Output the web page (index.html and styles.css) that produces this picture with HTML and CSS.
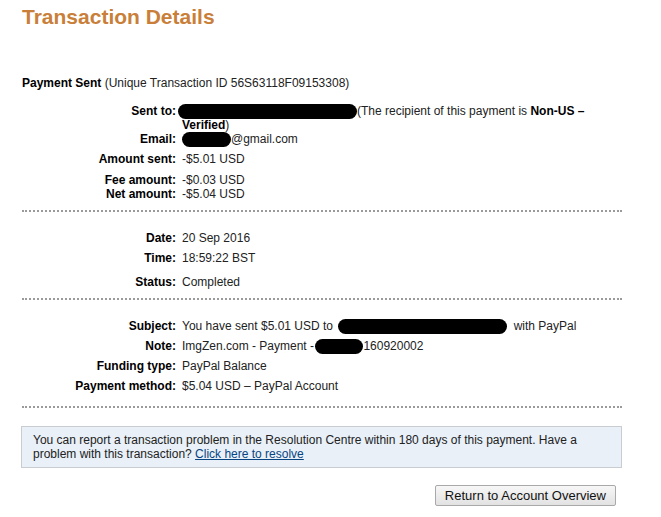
FILE: index.html
```html
<!DOCTYPE html>
<html>
<head>
<meta charset="utf-8">
<link rel="stylesheet" href="styles.css">
</head>
<body>
<div class="page">
  <h1 class="title">Transaction Details</h1>
  <p class="headline"><b>Payment Sent</b> (Unique Transaction ID 56S63118F09153308)</p>

  <div class="details sec1">
    <div class="lbl">Sent to:</div>
    <div class="val"><span class="redact r-sent"></span>(The recipient of this payment is <b>Non-US – Verified</b>)</div>
    <div class="lbl">Email:</div>
    <div class="val"><span class="redact r-email"></span>@gmail.com</div>
    <div class="lbl gap6">Amount sent:</div>
    <div class="val gap6">-$5.01 USD</div>
    <div class="lbl gap7">Fee amount:</div>
    <div class="val gap7">-$0.03 USD</div>
    <div class="lbl">Net amount:</div>
    <div class="val">-$5.04 USD</div>
  </div>
  <div class="rule r1"></div>

  <div class="details sec2">
    <div class="lbl">Date:</div>
    <div class="val">20 Sep 2016</div>
    <div class="lbl gap6">Time:</div>
    <div class="val gap6">18:59:22 BST</div>
    <div class="lbl gap10">Status:</div>
    <div class="val gap10">Completed</div>
  </div>
  <div class="rule r2"></div>

  <div class="details sec3">
    <div class="lbl">Subject:</div>
    <div class="val">You have sent $5.01 USD to <span class="redact r-subj"></span> with PayPal</div>
    <div class="lbl gap6">Note:</div>
    <div class="val gap6">ImgZen.com - Payment - <span class="redact r-note"></span>160920002</div>
    <div class="lbl gap6">Funding type:</div>
    <div class="val gap6">PayPal Balance</div>
    <div class="lbl gap6">Payment method:</div>
    <div class="val gap6">$5.04 USD – PayPal Account</div>
  </div>
  <div class="rule r3"></div>

  <div class="notice">You can report a transaction problem in the Resolution Centre within 180 days of this payment. Have a problem with this transaction? <a href="#" class="link">Click here to resolve</a></div>

  <div class="actions">
    <button class="btn" type="button">Return to Account Overview</button>
  </div>
</div>
</body>
</html>
```

FILE: styles.css
```css
html, body {
  margin: 0;
  padding: 0;
  background: #fff;
}
body {
  font-family: "Liberation Sans", Arial, sans-serif;
  font-size: 12px;
  line-height: 14px;
  color: #222;
}
.page {
  width: 600px;
  padding: 5px 0 0 22px;
}
.title {
  margin: 0;
  font-size: 21px;
  line-height: 24px;
  font-weight: bold;
  color: #c97f3a;
}
.headline {
  margin: 47px 0 0 0;
  color: #222;
}
.headline b {
  color: #000;
}
.details {
  display: grid;
  grid-template-columns: 154px 1fr;
  column-gap: 6px;
}
.sec1 { margin-top: 14px; }
.sec2 { margin-top: 19px; }
.sec3 { margin-top: 19px; }
.lbl {
  text-align: right;
  font-weight: bold;
  color: #000;
}
.val {
  color: #222;
}
.val b { color: #000; }
.gap6 { margin-top: 6px; }
.gap7 { margin-top: 7px; }
.gap10 { margin-top: 10px; }
.rule {
  height: 0;
  border-top: 2px dotted #9a9a9a;
}
.r1 { margin-top: 9px; }
.r2 { margin-top: 9px; }
.r3 { margin-top: 13px; }
.redact {
  display: inline-block;
  height: 15px;
  margin-bottom: -4px;
  background: #000;
  border-radius: 8px;
  vertical-align: baseline;
}
.r-sent { width: 179px; margin-left: -4px; }
.r-email { width: 49px; }
.r-subj { width: 169px; margin-left: 2px; margin-right: 3px; }
.r-note { width: 48px; margin-left: -2px; }
.notice {
  margin: 18px 0 0 -1px;
  padding: 6px 10px 6px 11px;
  background: #e9f0f8;
  border: 1px solid #c9cdd2;
  color: #222;
}
.link {
  color: #084482;
  text-decoration: underline;
}
.actions {
  display: flex;
  justify-content: flex-end;
  margin-top: 17px;
  padding-right: 6px;
}
.btn {
  font-family: "Liberation Sans", Arial, sans-serif;
  font-size: 13px;
  line-height: 15px;
  height: 21px;
  padding: 0 9px;
  color: #111;
  background: linear-gradient(#f7f7f7, #e2e2e2);
  border: 1px solid #a9a9a9;
  border-radius: 2px;
}
```
